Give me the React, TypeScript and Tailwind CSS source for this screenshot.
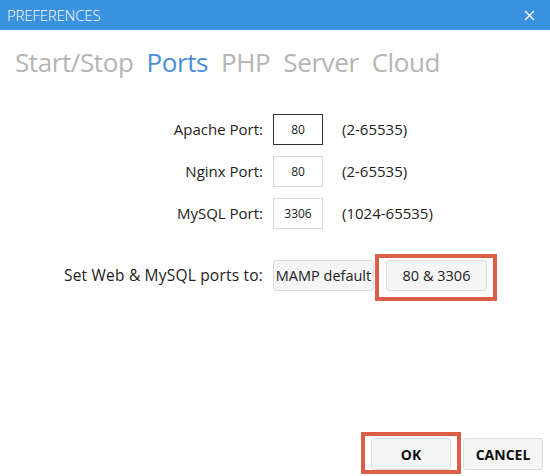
import React from "react";

const font = { fontFamily: '"Open Sans", "Noto Sans", sans-serif' };

function Row({ label, value, range, active }: { label: string; value: string; range: string; active?: boolean }) {
  return (
    <div className="flex items-center h-[31px]">
      <div className="w-[263px] text-right text-[15px] text-[#222]">{label}</div>
      <div
        className={`ml-[10px] w-[50px] h-[31px] flex items-center justify-center text-[12px] text-[#222] bg-white border ${
          active ? "border-[#333]" : "border-[#d9d9d9]"
        }`}
      >
        {value}
      </div>
      <div className="ml-[19px] text-[15px] text-[#222]">{range}</div>
    </div>
  );
}

export default function App() {
  return (
    <div className="w-[550px] h-[476px] bg-white flex flex-col overflow-hidden" style={font}>
      <div className="h-[30px] bg-[#3a91de] flex items-center justify-between pl-[7px] pr-[15px]">
        <span className="text-white text-[15px] font-light tracking-[-0.2px]">PREFERENCES</span>
        <svg width="11" height="11" viewBox="0 0 11 11">
          <path d="M1 1 L10 10 M10 1 L1 10" stroke="white" strokeWidth="1.3" />
        </svg>
      </div>
      <div className="flex items-baseline gap-[13px] pl-[15px] mt-[14px] text-[26px] leading-[36px] tracking-[-0.4px]">
        <span className="text-[#b5b5b5]">Start/Stop</span>
        <span className="text-[#4a8edb]">Ports</span>
        <span className="text-[#b5b5b5]">PHP</span>
        <span className="text-[#b5b5b5]">Server</span>
        <span className="text-[#b5b5b5]">Cloud</span>
      </div>
      <div className="flex flex-col gap-[11px] mt-[34px]">
        <Row label="Apache Port:" value="80" range="(2-65535)" active />
        <Row label="Nginx Port:" value="80" range="(2-65535)" />
        <Row label="MySQL Port:" value="3306" range="(1024-65535)" />
      </div>
      <div className="flex items-start mt-[25px]">
        <div className="w-[263px] text-right text-[15.5px] tracking-[0.2px] text-[#222] mt-[10px]">Set Web &amp; MySQL ports to:</div>
        <div className="ml-[10px] mt-[6px] w-[101px] h-[31px] flex items-center justify-center bg-[#f5f5f5] border border-[#dcdcdc] rounded-[3px] text-[14.5px] text-[#222]">
          MAMP default
        </div>
        <div className="ml-[1px] border-4 border-[#db5f47] pl-[7px] pr-[6px] pt-[2px] pb-[6px]">
          <div className="w-[101px] h-[31px] flex items-center justify-center bg-[#f5f5f5] border border-[#dcdcdc] rounded-[3px] text-[14.5px] text-[#222]">
            80 &amp; 3306
          </div>
        </div>
      </div>
      <div className="mt-auto mb-[2px] flex items-start justify-end pr-[7px]">
        <div className="border-4 border-[#db5f47] pl-[6px] pr-[6px] pt-[2px] pb-0">
          <div className="w-[80px] h-[32px] flex items-center justify-center bg-[#f5f5f5] border border-[#dcdcdc] rounded-[3px] text-[14px] font-bold text-[#111]">
            OK
          </div>
        </div>
        <div className="ml-[2px] mt-[6px] w-[80px] h-[32px] flex items-center justify-center bg-[#f5f5f5] border border-[#dcdcdc] rounded-[3px] text-[14px] font-bold text-[#111]">
          CANCEL
        </div>
      </div>
    </div>
  );
}
